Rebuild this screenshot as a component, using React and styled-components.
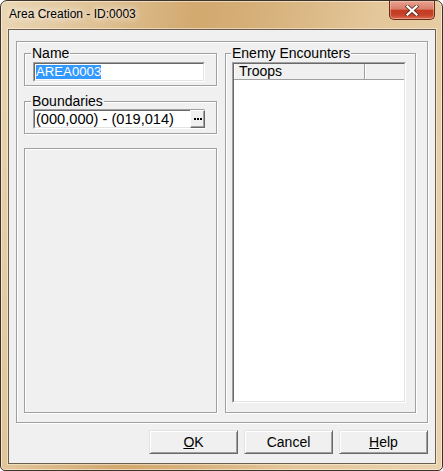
import React from 'react'
import styled, { createGlobalStyle } from 'styled-components'

const GlobalStyle = createGlobalStyle`
  html, body {
    margin: 0;
    padding: 0;
    background: #fff;
  }
  body {
    font-family: "Liberation Sans", Arial, sans-serif;
    font-size: 14px;
    color: #000;
  }
`

const Window = styled.div`
  box-sizing: border-box;
  width: 443px;
  height: 471px;
  display: flex;
  flex-direction: column;
  padding: 0 6px 6px 7px;
  border: 1px solid #3d3328;
  border-radius: 7px 7px 5px 5px;
  background: linear-gradient(
    100deg,
    #ead6b4 0%,
    #e0c396 18%,
    #d2a96f 38%,
    #d7b27c 52%,
    #e4c79a 72%,
    #e9d3ae 100%
  );
  box-shadow: inset 0 0 0 1px rgba(255, 250, 240, 0.55);
  overflow: hidden;
`
const TitleBar = styled.div`
  height: 28px;
  display: flex;
  align-items: flex-start;
  flex-shrink: 0;
`
const Title = styled.div`
  padding: 5px 0 0 1px;
  font-size: 12px;
  line-height: 16px;
  color: #000;
  text-shadow: 0 0 6px #fff, 0 0 10px rgba(255, 255, 255, 0.8);
`
const CloseButton = styled.div`
  box-sizing: border-box;
  margin-left: auto;
  margin-right: 1px;
  width: 46px;
  height: 19px;
  display: flex;
  align-items: center;
  justify-content: center;
  border: 1px solid #6a2a1c;
  border-top: none;
  border-radius: 0 0 5px 5px;
  background: linear-gradient(
    #e7a391 0%,
    #d97d68 45%,
    #c33b22 52%,
    #c6422a 78%,
    #de6d52 100%
  );
  box-shadow: inset 0 0 0 1px rgba(255, 210, 190, 0.45);
`
const Client = styled.div`
  flex: 1;
  box-sizing: border-box;
  display: flex;
  flex-direction: column;
  padding: 11px 7px 9px 7px;
  border: 1px solid #6b5e50;
  background: #f0f0f0;
  box-shadow: 0 0 0 1px rgba(255, 248, 235, 0.5);
`
const Panel = styled.div`
  flex: 1;
  display: flex;
  gap: 8px;
  padding: 3px 11px 9px 7px;
  border: 1px solid #a0a0a0;
  box-shadow: 1px 1px 0 #fff, inset 1px 1px 0 #fff;
`
const Column = styled.div`
  width: 193px;
  display: flex;
  flex-direction: column;
`
const GroupBox = styled.fieldset`
  box-sizing: border-box;
  margin: ${(p) => p.$margin || 0};
  min-width: 0;
  padding: ${(p) => p.$pad};
  border: 1px solid #a0a0a0;
  box-shadow: 1px 1px 0 #fff, inset 1px 1px 0 #fff;
  display: flex;
  flex-direction: column;
  flex: ${(p) => (p.$fill ? 1 : 'none')};
  width: ${(p) => p.$width || 'auto'};
`
const Legend = styled.legend`
  margin-left: ${(p) => p.$offset || -2}px;
  padding: 0 1px;
  font-size: 14px;
  line-height: 16px;
  background: #f0f0f0;
`
const BlankBox = styled.div`
  flex: 1;
  margin-top: 14px;
  border: 1px solid #a0a0a0;
  box-shadow: 1px 1px 0 #fff, inset 1px 1px 0 #fff;
`
const Sunken = styled.div`
  box-sizing: border-box;
  display: flex;
  flex-direction: column;
  flex: ${(p) => (p.$fill ? 1 : 'none')};
  height: ${(p) => (p.$fill ? 'auto' : '20px')};
  border: 1px solid;
  border-color: #a0a0a0 #fff #fff #a0a0a0;
`
const SunkenInner = styled.div`
  flex: 1;
  display: flex;
  flex-direction: ${(p) => (p.$column ? 'column' : 'row')};
  align-items: ${(p) => (p.$column ? 'stretch' : 'center')};
  padding-left: ${(p) => (p.$column ? 0 : 1)}px;
  border: 1px solid;
  border-color: #696969 #e3e3e3 #e3e3e3 #696969;
  background: #fff;
  font-size: 14px;
  line-height: 16px;
  white-space: nowrap;
`
const Selected = styled.span`
  background: #3399ff;
  color: #fff;
  font-size: 13.2px;
  line-height: 14px;
`
const FieldText = styled.span`
  font-size: 14.6px;
  line-height: 16px;
`
const EllipsisButton = styled.div`
  box-sizing: border-box;
  align-self: stretch;
  margin: -1px -2px -1px auto;
  width: 15px;
  display: flex;
  align-items: center;
  justify-content: center;
  border: 1px solid;
  border-color: #fff #696969 #696969 #fff;
  box-shadow: inset -1px -1px 0 #a0a0a0;
  background: #f0f0f0;
`
const Header = styled.div`
  display: flex;
  height: 16px;
  background: #f0f0f0;
`
const HeaderCell = styled.div`
  box-sizing: border-box;
  width: ${(p) => (p.$width ? `${p.$width}px` : 'auto')};
  flex: ${(p) => (p.$width ? 'none' : 1)};
  padding-left: 5px;
  border-bottom: 1px solid #a0a0a0;
  border-right: ${(p) => (p.$last ? 'none' : '1px solid #a0a0a0')};
  box-shadow: inset 1px 0 0 #fff;
  font-size: 14px;
  line-height: 15px;
`
const ButtonRow = styled.div`
  display: flex;
  justify-content: flex-end;
  gap: 6px;
  margin-top: 7px;
`
const Button = styled.div`
  box-sizing: border-box;
  width: 89px;
  height: 24px;
  display: flex;
  align-items: center;
  justify-content: center;
  border: 1px solid;
  border-color: #e3e3e3 #696969 #696969 #e3e3e3;
  box-shadow: inset 1px 1px 0 #fff, inset -1px -1px 0 #a0a0a0;
  background: #f0f0f0;
  font-size: 14px;
  line-height: 16px;
  padding-bottom: 1px;
`

const CloseGlyph = () => (
  <svg width="14" height="11" viewBox="0 0 14 11">
    <path
      d="M2.5 1.5 L11.5 9.5 M11.5 1.5 L2.5 9.5"
      stroke="#4a2a22"
      strokeWidth="4"
      strokeLinecap="square"
      opacity="0.75"
    />
    <path
      d="M2.5 1.5 L11.5 9.5 M11.5 1.5 L2.5 9.5"
      stroke="#fff"
      strokeWidth="2.2"
      strokeLinecap="square"
    />
  </svg>
)

const Dots = () => (
  <svg width="8" height="2" viewBox="0 0 8 2">
    <rect x="0" y="0" width="2" height="2" fill="#000" />
    <rect x="3" y="0" width="2" height="2" fill="#000" />
    <rect x="6" y="0" width="2" height="2" fill="#000" />
  </svg>
)

export default function App() {
  return (
    <>
      <GlobalStyle />
      <Window>
        <TitleBar>
          <Title>Area Creation - ID:0003</Title>
          <CloseButton>
            <CloseGlyph />
          </CloseButton>
        </TitleBar>
        <Client>
          <Panel>
            <Column>
              <GroupBox $pad="1px 11px 3px 8px">
                <Legend>Name</Legend>
                <Sunken>
                  <SunkenInner>
                    <Selected>AREA0003</Selected>
                  </SunkenInner>
                </Sunken>
              </GroupBox>
              <GroupBox $pad="0 11px 4px 8px" $margin="7px 0 0 0">
                <Legend>Boundaries</Legend>
                <Sunken>
                  <SunkenInner>
                    <FieldText>(000,000) - (019,014)</FieldText>
                    <EllipsisButton>
                      <Dots />
                    </EllipsisButton>
                  </SunkenInner>
                </Sunken>
              </GroupBox>
              <BlankBox />
            </Column>
            <GroupBox $pad="1px 9px 9px 6px" $width="191px">
              <Legend $offset={-1}>Enemy Encounters</Legend>
              <Sunken $fill>
                <SunkenInner $column>
                  <Header>
                    <HeaderCell $width={131}>Troops</HeaderCell>
                    <HeaderCell $last />
                  </Header>
                </SunkenInner>
              </Sunken>
            </GroupBox>
          </Panel>
          <ButtonRow>
            <Button>
              <span>
                <u>O</u>K
              </span>
            </Button>
            <Button>Cancel</Button>
            <Button>
              <span>
                <u>H</u>elp
              </span>
            </Button>
          </ButtonRow>
        </Client>
      </Window>
    </>
  )
}
